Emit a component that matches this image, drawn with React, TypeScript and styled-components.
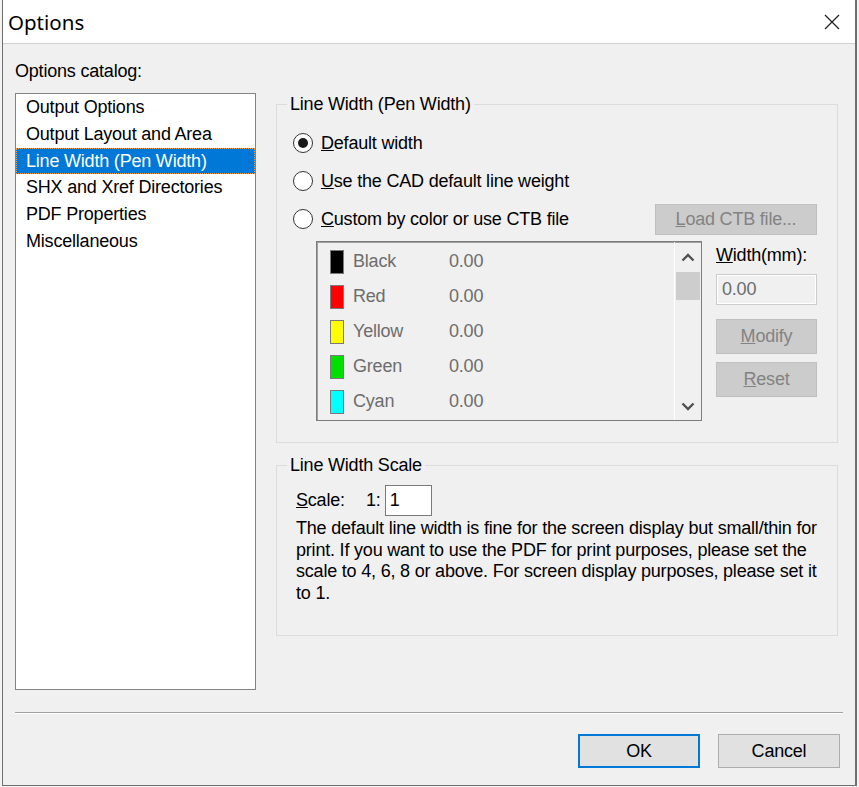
import React from "react";
import styled, { createGlobalStyle } from "styled-components";

const GlobalStyle = createGlobalStyle`
    html, body {
        margin: 0;
        padding: 0;
        background: #f3f3f3;
    }
    body {
        font-family: "Liberation Sans", Arial, sans-serif;
    }
`;

const Window = styled.div`
    box-sizing: border-box;
    width: 855px;
    height: 786px;
    margin-left: 2px;
    display: flex;
    flex-direction: column;
    background: #f0f0f0;
    border: 1px solid #6f6f6f;
    border-top: none;
    border-right-width: 2px;
`;

const TitleBar = styled.div`
    height: 43px;
    flex: none;
    display: flex;
    align-items: center;
    justify-content: space-between;
    background: #ffffff;
    border-bottom: 1px solid #cfcfcf;
    padding: 0 15px 0 5px;
`;

const Title = styled.div`
    font-family: "Noto Sans", "Open Sans", sans-serif;
    font-size: 20.5px;
    color: #000;
`;

const Body = styled.div`
    flex: 1;
    display: flex;
    flex-direction: column;
    padding: 17px 12px 0 12px;
    font-size: 18px;
    letter-spacing: -0.2px;
    color: #000;
`;

const Main = styled.div`
    display: flex;
    gap: 20px;
`;

const CatalogColumn = styled.div`
    width: 241px;
    display: flex;
    flex-direction: column;
`;

const Caption = styled.div`
    line-height: 20px;
    margin-bottom: 12px;
`;

const CatalogList = styled.ul`
    list-style: none;
    margin: 0;
    padding: 0;
    box-sizing: border-box;
    height: 597px;
    border: 1px solid #828282;
    background: #ffffff;
`;

const CatalogItem = styled.li<{ $selected?: boolean }>`
    height: 26.75px;
    line-height: 26.75px;
    padding-left: 10px;
    white-space: nowrap;
    background: ${(p) => (p.$selected ? "#0078d7" : "transparent")};
    color: ${(p) => (p.$selected ? "#ffffff" : "#000000")};
    outline: ${(p) => (p.$selected ? "1px dotted #f0a048" : "none")};
    outline-offset: -1px;
`;

const SettingsColumn = styled.div`
    width: 562px;
    padding-top: 33px;
    display: flex;
    flex-direction: column;
`;

const Group = styled.fieldset<{ $gap?: number }>`
    margin: ${(p) => p.$gap ?? 0}px 0 0 0;
    padding: 0;
    border: 1px solid #dcdcdc;
    min-width: 0;
`;

const Legend = styled.legend`
    margin-left: 10px;
    padding: 0 3px;
    line-height: 20px;
`;

const GroupBody = styled.div<{ $pad: string }>`
    padding: ${(p) => p.$pad};
`;

const RadioRow = styled.div`
    height: 38px;
    display: flex;
    align-items: center;
    justify-content: space-between;
`;

const RadioLabel = styled.label`
    display: flex;
    align-items: center;
    gap: 8px;
`;

const RadioCircle = styled.span<{ $checked?: boolean }>`
    box-sizing: border-box;
    width: 20px;
    height: 20px;
    border-radius: 50%;
    border: 1px solid #333333;
    background: #ffffff;
    display: flex;
    align-items: center;
    justify-content: center;

    &::after {
        content: "";
        width: 10px;
        height: 10px;
        border-radius: 50%;
        background: ${(p) => (p.$checked ? "#1a1a1a" : "transparent")};
    }
`;

const DisabledButton = styled.button<{ $width: number; $height: number }>`
    box-sizing: border-box;
    width: ${(p) => p.$width}px;
    height: ${(p) => p.$height}px;
    padding: 0;
    border: 1px solid #bfbfbf;
    background: #cccccc;
    color: #838383;
    font: inherit;
    letter-spacing: inherit;
`;

const PenPanel = styled.div`
    margin: 3px 0 0 23px;
    display: flex;
    gap: 14px;
`;

const ColorList = styled.div`
    box-sizing: border-box;
    width: 386px;
    height: 180px;
    border: 1px solid #7d7d7d;
    box-shadow: inset 1px 1px 0 #a0a0a0;
    display: flex;
`;

const ColorRows = styled.div`
    flex: 1;
    padding: 2px 0 0 13px;
`;

const ColorRow = styled.div`
    height: 35px;
    display: flex;
    align-items: center;
    color: #6d6d6d;
`;

const Swatch = styled.span<{ $color: string }>`
    box-sizing: border-box;
    width: 14px;
    height: 24px;
    margin-right: 9px;
    border: 1px solid #7a7a7a;
    background: ${(p) => p.$color};
`;

const ColorName = styled.span`
    width: 96px;
`;

const ScrollBar = styled.div`
    width: 26px;
    border-left: 1px solid #ffffff;
    display: flex;
    flex-direction: column;
`;

const ScrollArrow = styled.div<{ $height: number }>`
    height: ${(p) => p.$height}px;
    display: flex;
    align-items: center;
    justify-content: center;
`;

const ScrollThumb = styled.div`
    height: 28px;
    margin: 0 1px;
    background: #cdcdcd;
`;

const ScrollTrack = styled.div`
    flex: 1;
`;

const SideColumn = styled.div`
    width: 101px;
    padding-top: 4px;
    display: flex;
    flex-direction: column;
`;

const FieldLabel = styled.div`
    line-height: 20px;
    margin-bottom: 9px;
    white-space: nowrap;
`;

const WidthInput = styled.input`
    box-sizing: border-box;
    width: 101px;
    height: 31px;
    margin: 0 0 14px 0;
    padding: 0 0 0 5px;
    border: 1px solid #cccccc;
    box-shadow: inset 0 0 0 1px #ffffff;
    background: #f0f0f0;
    color: #6d6d6d;
    font: inherit;
    letter-spacing: inherit;
    outline: none;
`;

const ButtonStack = styled.div`
    display: flex;
    flex-direction: column;
    gap: 8px;
`;

const ScaleRow = styled.div`
    height: 31px;
    display: flex;
    align-items: center;
`;

const ScaleLabel = styled.span`
    width: 70px;
`;

const ScaleInput = styled.input`
    box-sizing: border-box;
    width: 47px;
    height: 31px;
    margin-left: 4px;
    padding: 0 0 0 4px;
    border: 1px solid #7a7a7a;
    background: #ffffff;
    font: inherit;
    letter-spacing: inherit;
    outline: none;
`;

const Note = styled.div`
    margin-top: 2px;
    line-height: 21.5px;
`;

const NoteLine = styled.span`
    display: block;
    white-space: nowrap;
`;

const Separator = styled.div`
    margin-top: 22px;
    border-top: 1px solid #a0a0a0;
    border-bottom: 1px solid #ffffff;
`;

const Footer = styled.div`
    margin-top: 20px;
    padding-right: 3px;
    display: flex;
    justify-content: flex-end;
    gap: 18px;
`;

const DialogButton = styled.button<{ $default?: boolean }>`
    box-sizing: border-box;
    width: 122px;
    height: 34px;
    padding: 0;
    background: #e1e1e1;
    border: ${(p) => (p.$default ? "2px solid #0078d7" : "1px solid #adadad")};
    color: #000;
    font: inherit;
    letter-spacing: inherit;
`;

const Chevron: React.FC<{ down?: boolean }> = ({ down }) => (
    <svg width="14" height="9" viewBox="0 0 14 9">
        <polyline
            points={down ? "1.5,1.5 7,7 12.5,1.5" : "1.5,7.5 7,2 12.5,7.5"}
            fill="none"
            stroke="#505050"
            strokeWidth="2.4"
        />
    </svg>
);

const CloseIcon = () => (
    <svg width="16" height="16" viewBox="0 0 16 16">
        <path d="M1 1 L15 15 M15 1 L1 15" stroke="#222" strokeWidth="1.3" fill="none" />
    </svg>
);

const catalog = [
    "Output Options",
    "Output Layout and Area",
    "Line Width (Pen Width)",
    "SHX and Xref Directories",
    "PDF Properties",
    "Miscellaneous",
];

const pens = [
    { name: "Black", color: "#000000" },
    { name: "Red", color: "#ff0000" },
    { name: "Yellow", color: "#ffff00" },
    { name: "Green", color: "#00e000" },
    { name: "Cyan", color: "#00ffff" },
];

const App: React.FC = () => {
    return (
        <>
            <GlobalStyle />
            <Window>
                <TitleBar>
                    <Title>Options</Title>
                    <CloseIcon />
                </TitleBar>
                <Body>
                    <Main>
                        <CatalogColumn>
                            <Caption>Options catalog:</Caption>
                            <CatalogList>
                                {catalog.map((item, i) => (
                                    <CatalogItem key={item} $selected={i === 2}>
                                        {item}
                                    </CatalogItem>
                                ))}
                            </CatalogList>
                        </CatalogColumn>
                        <SettingsColumn>
                            <Group>
                                <Legend>Line Width (Pen Width)</Legend>
                                <GroupBody $pad="10px 20px 21px 16px">
                                    <RadioRow>
                                        <RadioLabel>
                                            <RadioCircle $checked />
                                            <span>
                                                <u>D</u>efault width
                                            </span>
                                        </RadioLabel>
                                    </RadioRow>
                                    <RadioRow>
                                        <RadioLabel>
                                            <RadioCircle />
                                            <span>
                                                <u>U</u>se the CAD default line weight
                                            </span>
                                        </RadioLabel>
                                    </RadioRow>
                                    <RadioRow>
                                        <RadioLabel>
                                            <RadioCircle />
                                            <span>
                                                <u>C</u>ustom by color or use CTB file
                                            </span>
                                        </RadioLabel>
                                        <DisabledButton $width={162} $height={31}>
                                            <u>L</u>oad CTB file...
                                        </DisabledButton>
                                    </RadioRow>
                                    <PenPanel>
                                        <ColorList>
                                            <ColorRows>
                                                {pens.map((pen) => (
                                                    <ColorRow key={pen.name}>
                                                        <Swatch $color={pen.color} />
                                                        <ColorName>{pen.name}</ColorName>
                                                        <span>0.00</span>
                                                    </ColorRow>
                                                ))}
                                            </ColorRows>
                                            <ScrollBar>
                                                <ScrollArrow $height={30}>
                                                    <Chevron />
                                                </ScrollArrow>
                                                <ScrollThumb />
                                                <ScrollTrack />
                                                <ScrollArrow $height={28}>
                                                    <Chevron down />
                                                </ScrollArrow>
                                            </ScrollBar>
                                        </ColorList>
                                        <SideColumn>
                                            <FieldLabel>
                                                <u>W</u>idth(mm):
                                            </FieldLabel>
                                            <WidthInput value="0.00" readOnly />
                                            <ButtonStack>
                                                <DisabledButton $width={101} $height={35}>
                                                    <u>M</u>odify
                                                </DisabledButton>
                                                <DisabledButton $width={101} $height={35}>
                                                    <u>R</u>eset
                                                </DisabledButton>
                                            </ButtonStack>
                                        </SideColumn>
                                    </PenPanel>
                                </GroupBody>
                            </Group>
                            <Group $gap={12}>
                                <Legend>Line Width Scale</Legend>
                                <GroupBody $pad="10px 12px 31px 19px">
                                    <ScaleRow>
                                        <ScaleLabel>
                                            <u>S</u>cale:
                                        </ScaleLabel>
                                        <span>1:</span>
                                        <ScaleInput value="1" readOnly />
                                    </ScaleRow>
                                    <Note>
                                        <NoteLine>
                                            The default line width is fine for the screen display but small/thin for
                                        </NoteLine>
                                        <NoteLine>
                                            print. If you want to use the PDF for print purposes, please set the
                                        </NoteLine>
                                        <NoteLine>
                                            scale to 4, 6, 8 or above. For screen display purposes, please set it
                                        </NoteLine>
                                        <NoteLine>to 1.</NoteLine>
                                    </Note>
                                </GroupBody>
                            </Group>
                        </SettingsColumn>
                    </Main>
                    <Separator />
                    <Footer>
                        <DialogButton $default>OK</DialogButton>
                        <DialogButton>Cancel</DialogButton>
                    </Footer>
                </Body>
            </Window>
        </>
    );
};

export default App;
